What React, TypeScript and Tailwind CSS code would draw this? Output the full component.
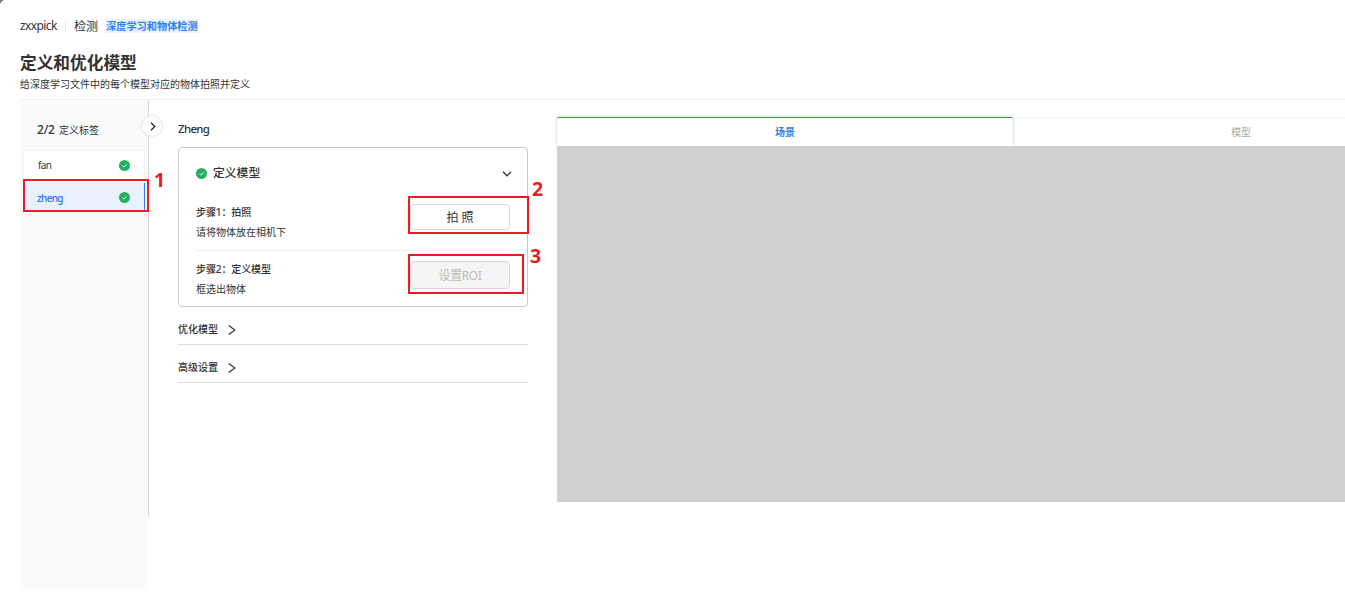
import type { ReactNode } from "react";

function CheckBadge({ className = "" }: { className?: string }) {
  return (
    <svg className={`h-[11px] w-[11px] shrink-0 ${className}`} viewBox="0 0 11 11" fill="none">
      <circle cx="5.5" cy="5.5" r="5.5" fill="#27ae60" />
      <path d="M3.4 5.6 4.9 7.1 7.7 4.2" stroke="#d9f5e4" strokeWidth="1" />
    </svg>
  );
}

function Chevron({ className = "" }: { className?: string }) {
  return (
    <svg className={`h-[10px] w-[8px] shrink-0 ${className}`} viewBox="0 0 8 10" fill="none">
      <path d="M0.7 0.6 6.8 5 0.7 9.4" stroke="#333" strokeWidth="1.2" />
    </svg>
  );
}

function Marker({ box, label, children }: { box: string; label: string; children: ReactNode }) {
  return (
    <>
      <div className={`absolute border-2 border-[#ed1c24] ${box}`} />
      <span className={`absolute text-[19.5px] leading-5 font-bold text-[#ed1c24] ${label}`}>{children}</span>
    </>
  );
}

function Step({ title, hint, children }: { title: string; hint: string; children: ReactNode }) {
  return (
    <div className="flex items-start justify-between">
      <div className="flex flex-col text-[10px] leading-[14px]">
        <span className="pt-px font-medium tracking-[-0.1px]">{title}</span>
        <span className="mt-[6px]">{hint}</span>
      </div>
      {children}
    </div>
  );
}

function Section({ title }: { title: string }) {
  return (
    <div className="flex h-[38px] items-center border-b border-[#dcdcdc] pt-[8px] text-[10px] font-medium">
      <span>{title}</span>
      <Chevron className="ml-[10px]" />
    </div>
  );
}

export default function App() {
  return (
    <div className="relative h-[603px] w-full overflow-hidden bg-white font-['Noto_Sans','Noto_Sans_CJK_SC',sans-serif] text-[#333]">
      <svg className="absolute top-0 left-0 h-[5px] w-[5px]" viewBox="0 0 5 5">
        <path d="M0 0H4Q1 1 0 4Z" fill="#777" />
      </svg>

      <header className="ml-5 h-[100px] border-b border-[#eee] pt-[18px]">
        <div className="flex h-4 items-center text-[12px] leading-4">
          <span className="w-[37px] text-[12px] tracking-[-0.6px]">zxxpick</span>
          <span className="ml-[8px] h-[11px] w-px bg-[#e8e8e8]" />
          <span className="ml-2 pt-px">检测</span>
          <span className="ml-2 h-[14px] bg-[#eaf2fe] text-[10.2px] leading-[14px] font-bold text-[#2d7ff0]">深度学习和物体检测</span>
        </div>
        <h1 className="mt-[19px] text-[16.7px] leading-5 font-bold">定义和优化模型</h1>
        <p className="mt-[4px] text-[10px] leading-[14px]">给深度学习文件中的每个模型对应的物体拍照并定义</p>
      </header>

      <div className="ml-5 flex h-[491px]">
        <aside className="relative w-32 shrink-0 bg-[#fafafa] pt-[21px]">
          <div className="flex h-[18px] items-center pl-[17px]">
            <span className="w-[22px] text-[12px] font-medium tracking-[-0.2px]">2/2</span>
            <span className="pt-px text-[10px]">定义标签</span>
          </div>
          <div className="mt-[12px] ml-1 flex h-[29px] w-[120px] items-center justify-between bg-white pr-[14px] pl-[14px] text-[10px] shadow-[0_0_1px_#ddd]">
            <span className="tracking-[-0.6px]">fan</span>
            <CheckBadge />
          </div>
          <div className="mt-[3px] ml-1 flex h-[28px] w-[121px] items-center justify-between border-r border-[#2d7ff0] bg-[#e9f1fe] pr-[14px] pl-[13px] text-[10px] font-medium text-[#2f6ff0]">
            <span className="pt-[2px] tracking-[-0.7px]">zheng</span>
            <CheckBadge />
          </div>
        </aside>

        <div className="relative h-[417px] w-px shrink-0 bg-[#d9d9d9]">
          <button className="absolute top-[16px] left-[-6px] flex h-[20px] w-[20px] items-center justify-center rounded-full bg-white shadow-[0_0_3px_#ccc]">
            <svg className="ml-[2px] h-[9px] w-[6px]" viewBox="0 0 6 9" fill="none">
              <path d="M1 0.8 4.8 4.5 1 8.2" stroke="#222" strokeWidth="1.2" />
            </svg>
          </button>
        </div>

        <main className="ml-[29px] w-[350px] shrink-0 pt-[21px]">
          <h2 className="text-[11.5px] leading-4 font-medium tracking-[-0.7px]">Zheng</h2>
          <section className="mt-[10px] h-[160px] rounded border border-[#c8c8c8] px-[17px] pt-[15px]">
            <div className="flex h-[18px] items-center">
              <CheckBadge className="mt-[2px]" />
              <span className="ml-[6px] flex-1 text-[11.8px] leading-[18px] font-medium">定义模型</span>
              <svg className="mt-[4px] mr-[-2px] h-[6px] w-[10px]" viewBox="0 0 10 6" fill="none">
                <path d="M1 0.8 5 4.8 9 0.8" stroke="#333" strokeWidth="1.3" />
              </svg>
            </div>
            <div className="mt-[23px] h-[47px] border-b border-[#eee]">
              <Step title="步骤1：拍照" hint="请将物体放在相机下">
                <button className="h-[26px] w-[100px] rounded border border-[#d9d9d9] bg-white pt-px text-[12px]">拍 照</button>
              </Step>
            </div>
            <div className="mt-[10px]">
              <Step title="步骤2：定义模型" hint="框选出物体">
                <button className="h-[28px] w-[100px] rounded border border-[#d9d9d9] bg-[#f5f5f5] pt-px text-[12px] tracking-[-0.4px] text-[#bbb]">设置ROI</button>
              </Step>
            </div>
          </section>
          <Section title="优化模型" />
          <Section title="高级设置" />
        </main>

        <section className="mt-[17px] ml-[29px] w-[912px] shrink-0">
          <div className="flex h-[29px] text-[10px]">
            <div className="flex h-full w-[456px] items-center justify-center rounded-t-xs border-t border-[#3f7fd0] bg-white font-bold text-[#2d7ff0] shadow-[0_0_3px_#bbb]">场景</div>
            <div className="flex h-full w-[456px] items-center justify-center border-t border-[#f5f5f5] text-[#aaa]">模型</div>
          </div>
          <div className="relative h-[356px] bg-[#d0d0d0]" />
        </section>
      </div>

      <Marker box="left-[23px] top-[179px] h-[33px] w-[126px]" label="left-[154px] top-[170px]">1</Marker>
      <Marker box="left-[408px] top-[196px] h-[38px] w-[121px]" label="left-[532px] top-[179px]">2</Marker>
      <Marker box="left-[408px] top-[254px] h-[40px] w-[116px]" label="left-[530px] top-[246px]">3</Marker>
    </div>
  );
}
